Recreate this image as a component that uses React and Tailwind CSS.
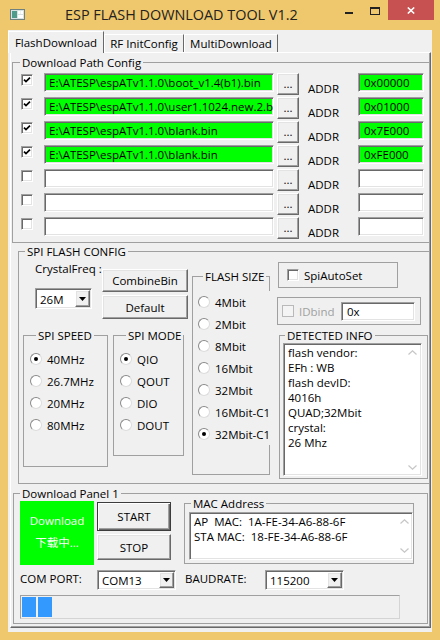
import React from 'react';

const sunken = "border border-t-[#a0a0a0] border-l-[#a0a0a0] border-b-white border-r-white shadow-[inset_1px_1px_0_#696969,inset_-1px_-1px_0_#e3e3e3]";
const raised = "border border-t-white border-l-white border-b-[#696969] border-r-[#696969] shadow-[inset_-1px_-1px_0_#a0a0a0,inset_1px_1px_0_#e3e3e3] bg-[#f0f0f0]";

const rows = [
  { on: true, path: "E:\\ATESP\\espATv1.1.0\\boot_v1.4(b1).bin", addr: "0x00000" },
  { on: true, path: "E:\\ATESP\\espATv1.1.0\\user1.1024.new.2.bin", addr: "0x01000" },
  { on: true, path: "E:\\ATESP\\espATv1.1.0\\blank.bin", addr: "0x7E000" },
  { on: true, path: "E:\\ATESP\\espATv1.1.0\\blank.bin", addr: "0xFE000" },
  { on: false, path: "", addr: "" },
  { on: false, path: "", addr: "" },
  { on: false, path: "", addr: "" },
];

const detected = ["flash vendor:", "EFh : WB", "flash devID:", "4016h", "QUAD;32Mbit", "crystal:", "26 Mhz"];

function Check({ checked, disabled, className = "" }) {
  return (
    <span className={`${disabled ? "bg-[#f4f4f4] border border-[#b9b9b9]" : sunken + " bg-white"} w-[12px] h-[12px] shrink-0 flex items-center justify-center ${className}`}>
      {checked && (
        <svg width="8" height="8" viewBox="0 0 8 8">
          <path d="M1 3.6 L3 5.6 L7 1.6" fill="none" stroke="#000" strokeWidth="1.7" />
        </svg>
      )}
    </span>
  );
}

function Btn({ children, className = "", main }) {
  const look = main
    ? "border border-[#3c3c3c] shadow-[inset_1px_1px_0_#fff,inset_-1px_-1px_0_#696969,inset_-2px_-2px_0_#a0a0a0] bg-[#f0f0f0]"
    : raised;
  return (
    <div className={`${look} shrink-0 flex items-center justify-center leading-[15px] ${className}`}>
      {children}
    </div>
  );
}

function Radio({ label, checked, className = "" }) {
  return (
    <div className={`flex items-center h-[22px] ${className}`}>
      <span className="w-[12px] h-[12px] rounded-full bg-white border border-t-[#8a8a8a] border-l-[#8a8a8a] border-b-[#dcdcdc] border-r-[#dcdcdc] flex items-center justify-center shrink-0">
        {checked && <span className="w-[4px] h-[4px] rounded-full bg-black" />}
      </span>
      <span className="ml-[5px] leading-[15px] whitespace-nowrap">{label}</span>
    </div>
  );
}

function Combo({ text, className = "" }) {
  return (
    <div className={`${sunken} bg-white flex items-stretch shrink-0 ${className}`}>
      <span className="flex-1 pl-[4px] pt-[1px] leading-[15px] flex items-center">{text}</span>
      <span className={`${raised} w-[15px] my-[1px] mr-[1px] flex items-center justify-center`}>
        <svg width="7" height="4" viewBox="0 0 7 4">
          <polygon points="0,0 7,0 3.5,4" fill="#000" />
        </svg>
      </span>
    </div>
  );
}

function Group({ label, className = "", legend = "", children }) {
  return (
    <fieldset className={`border border-[#a0a0a0] shrink-0 min-w-0 ${className}`}>
      <legend className={`px-[2px] leading-[15px] whitespace-nowrap ${legend}`}>{label}</legend>
      {children}
    </fieldset>
  );
}

function Chevron({ up }) {
  return (
    <svg width="9" height="5" viewBox="0 0 9 5">
      <polyline points={up ? "0.5,4.5 4.5,0.8 8.5,4.5" : "0.5,0.5 4.5,4.2 8.5,0.5"} fill="none" stroke="#c6c6c6" strokeWidth="1.2" />
    </svg>
  );
}

function Memo({ lines, className = "", pre, col = "w-[17px]", top = "pt-[6px]", bottom = "pb-[5px]" }) {
  return (
    <div className={`${sunken} bg-white flex ${className}`}>
      <div className={`flex-1 pl-[4px] pt-[1px] leading-[15px] ${pre ? "whitespace-pre" : ""}`}>
        {lines.map((l, i) => <div key={i}>{l}</div>)}
      </div>
      <div className={`${col} flex flex-col items-center justify-between ${top} ${bottom}`}>
        <Chevron up />
        <Chevron />
      </div>
    </div>
  );
}

export default function App() {
  return (
    <div className="w-[440px] h-[640px] bg-[#efc76c] flex flex-col overflow-hidden text-[11.5px] text-black font-['Open_Sans','Noto_Sans_CJK_SC',sans-serif]">
      {/* title bar */}
      <div className="h-[30px] flex items-start shrink-0">
        <svg className="ml-[10px] mt-[9px]" width="15" height="11" viewBox="0 0 15 11">
          <rect x="0.5" y="0.5" width="14" height="10" fill="#d9e2e2" stroke="#6f8080" />
          <rect x="2" y="2" width="5" height="7" fill="#4f9c8c" />
          <rect x="8" y="2" width="2.5" height="3" fill="#fff" />
          <rect x="11" y="2" width="2" height="3" fill="#fff" />
          <rect x="8" y="6" width="5" height="3" fill="#fff" />
        </svg>
        <div className="ml-[40px] leading-[30px] text-[14.4px] text-[#222]">ESP FLASH DOWNLOAD TOOL V1.2</div>
        <div className="ml-auto mr-[6px] flex items-start">
          <div className="w-[26px] h-[20px] flex justify-center">
            <span className="mt-[12px] w-[8px] h-[2px] bg-[#222]" />
          </div>
          <div className="w-[26px] h-[20px] flex justify-center">
            <span className="mt-[7px] w-[10px] h-[8px] border border-t-2 border-[#222]" />
          </div>
          <div className="w-[46px] h-[20px] bg-[#c75050] flex items-center justify-center">
            <svg width="8" height="7" viewBox="0 0 8 7">
              <path d="M0.8 0.5 L7.2 6.5 M7.2 0.5 L0.8 6.5" stroke="#fff" strokeWidth="1.6" />
            </svg>
          </div>
        </div>
      </div>

      {/* client */}
      <div className="ml-[8px] w-[424px] h-[602px] bg-[#f0f0f0] flex flex-col shrink-0">
        {/* tabs */}
        <div className="h-[22px] flex items-end shrink-0">
          <div className="relative z-10 -mb-[1px] w-[96px] h-[22px] bg-[#f0f0f0] border-l border-t border-white border-r border-r-[#696969] flex items-center justify-center leading-[15px]">
            FlashDownload
          </div>
          <div className="w-[80px] h-[18px] border-l border-t border-white border-r border-r-[#696969] flex items-center justify-center leading-[15px]">
            RF InitConfig
          </div>
          <div className="w-[94px] h-[18px] border-l border-t border-white border-r border-r-[#696969] flex items-center justify-center leading-[15px]">
            MultiDownload
          </div>
        </div>

        {/* tab panel */}
        <div className="ml-[2px] w-[421px] h-[576px] border border-t-white border-l-white border-r-[#696969] border-b-[#696969] shadow-[inset_-1px_-1px_0_#a0a0a0] flex flex-col shrink-0">
          <Group label="Download Path Config" className="ml-[1px] mt-[2px] w-[418px] pt-[3px] pb-[1px]" legend="ml-[7px]">
            {rows.map((r, i) => (
              <div key={i} className="flex h-[24px] items-start">
                <Check checked={r.on} className="ml-[8px] mt-[1px]" />
                <div className={`${sunken} ${r.on ? "bg-[#00ff00]" : "bg-white"} ml-[11px] w-[230px] h-[19px] pl-[4px] leading-[15px] flex items-center whitespace-nowrap overflow-hidden`}>
                  {r.path}
                </div>
                <Btn className="ml-[3px] w-[22px] h-[22px] pb-[2px]">...</Btn>
                <div className="ml-[9px] w-[50px] mt-[8px] leading-[15px]">ADDR</div>
                <div className={`${sunken} ${r.on ? "bg-[#00ff00]" : "bg-white"} w-[66px] h-[19px] pl-[5px] leading-[15px] flex items-center`}>
                  {r.addr}
                </div>
              </div>
            ))}
          </Group>

          <Group label="SPI FLASH CONFIG" className="ml-[7px] mt-[1px] w-[412px] h-[240px]" legend="ml-[6px]">
            <div className="flex items-start">
              <div className="w-[169px] flex flex-col shrink-0">
                <div className="flex">
                  <div className="w-[83px] pl-[16px] flex flex-col">
                    <div className="mt-[2px] leading-[15px]">CrystalFreq :</div>
                    <Combo text="26M" className="mt-[12px] w-[57px] h-[21px]" />
                  </div>
                  <div className="flex flex-col">
                    <Btn className="mt-[10px] w-[86px] h-[23px]">CombineBin</Btn>
                    <Btn className="mt-[3px] w-[86px] h-[24px]">Default</Btn>
                  </div>
                </div>
                <div className="flex items-start mt-[9px]">
                  <Group label="SPI SPEED" className="ml-[4px] w-[85px] h-[139px] pt-[5px] pl-[6px]" legend="ml-[6px]">
                    <Radio label="40MHz" checked />
                    <Radio label="26.7MHz" />
                    <Radio label="20MHz" />
                    <Radio label="80MHz" />
                  </Group>
                  <Group label="SPI MODE" className="ml-[5px] w-[71px] h-[128px] pt-[5px] pl-[6px]" legend="ml-[6px]">
                    <Radio label="QIO" checked />
                    <Radio label="QOUT" />
                    <Radio label="DIO" />
                    <Radio label="DOUT" />
                  </Group>
                </div>
              </div>

              <Group label="FLASH SIZE" className="ml-[4px] mt-[10px] w-[78px] h-[206px] pt-[7px] pl-[5px]" legend="ml-[5px]">
                {["4Mbit", "2Mbit", "8Mbit", "16Mbit", "32Mbit", "16Mbit-C1", "32Mbit-C1"].map((s) => (
                  <Radio key={s} label={s} checked={s === "32Mbit-C1"} className="w-[76px] bg-[#f0f0f0]" />
                ))}
              </Group>

              <div className="ml-[7px] flex flex-col">
                <div className="ml-[1px] mt-[3px] w-[120px] h-[26px] border border-[#a0a0a0] flex items-center">
                  <Check className="ml-[8px]" />
                  <span className="ml-[5px] leading-[15px]">SpiAutoSet</span>
                </div>
                <div className="mt-[9px] w-[144px] h-[28px] border border-[#a0a0a0] flex items-center">
                  <Check disabled className="ml-[4px]" />
                  <span className="ml-[5px] leading-[15px] text-[#a0a0a0]">IDbind</span>
                  <div className={`${sunken} bg-white ml-auto mr-[5px] w-[74px] h-[19px] pl-[5px] leading-[15px] flex items-center`}>0x</div>
                </div>
                <Group label="DETECTED INFO" className="ml-[2px] mt-[3px] w-[149px] h-[151px]" legend="ml-[5px]">
                  <Memo lines={detected} className="ml-[3px] w-[139px] h-[133px]" />
                </Group>
              </div>
            </div>
          </Group>

          <Group label="Download Panel 1" className="ml-[2px] mt-[2px] w-[415px] h-[138px]" legend="ml-[6px]">
            <div className="flex items-start h-[64px]">
              <div className="ml-[6px] w-[74px] h-[64px] bg-[#00ff00] text-white flex flex-col items-center pt-[12px] leading-[15px]">
                <div>Download</div>
                <div className="mt-[7px]">下载中...</div>
              </div>
              <div className="ml-[3px] flex flex-col">
                <Btn main className="mt-[1px] w-[74px] h-[29px]">START</Btn>
                <Btn className="mt-[3px] w-[74px] h-[26px]">STOP</Btn>
              </div>
              <Group label="MAC Address" className="ml-[13px] -mt-[5px] w-[230px] h-[68px]" legend="ml-[6px]">
                <Memo
                  pre
                  lines={["AP  MAC:  1A-FE-34-A6-88-6F", "STA MAC:  18-FE-34-A6-88-6F"]}
                  className="ml-[4px] mt-[1px] w-[224px] h-[48px]"
                  col="w-[16px]"
                  bottom="pb-[6px]"
                />
              </Group>
            </div>
            <div className="flex items-start mt-[5px]">
              <div className="ml-[6px] w-[77px] leading-[15px] mt-[1px]">COM PORT:</div>
              <Combo text="COM13" className="w-[79px] h-[20px]" />
              <div className="ml-[9px] w-[80px] leading-[15px] mt-[1px]">BAUDRATE:</div>
              <Combo text="115200" className="w-[79px] h-[20px]" />
            </div>
            <div className="mt-[5px] ml-[6px] w-[380px] h-[24px] border border-t-[#a0a0a0] border-l-[#a0a0a0] border-b-[#d4d4d4] border-r-[#d4d4d4] bg-[#f0f0f0] flex items-start pl-[1px] pt-[1px]">
              <span className="w-[14px] h-[20px] bg-[#3399ff]" />
              <span className="ml-[2px] w-[14px] h-[20px] bg-[#3399ff]" />
            </div>
          </Group>
        </div>
      </div>
    </div>
  );
}
